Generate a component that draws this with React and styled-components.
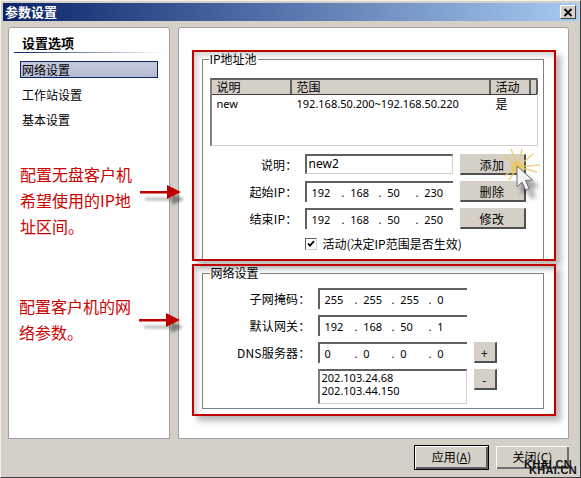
import React from "react";
import styled, { createGlobalStyle } from "styled-components";

const Global = createGlobalStyle`
  html, body { margin: 0; padding: 0; background: #d4d0c8; }
  * { box-sizing: border-box; }
`;
const FONT = `"Noto Sans", "Noto Sans CJK SC", sans-serif`;
const CJK = `"Noto Sans CJK SC", "Noto Sans", sans-serif`;

const Window = styled.div`
  position: relative; width: 581px; height: 478px; overflow: hidden;
  display: flex; flex-direction: column;
  background: #d4d0c8;
  border-style: solid; border-width: 1px;
  border-color: #f4f2ee #404040 #404040 #f4f2ee;
  padding: 2px;
  font: 12px/14px ${CJK}; color: #000;
`;
const TitleBar = styled.div`
  flex: none; height: 18px; display: flex; align-items: center; justify-content: space-between;
  padding: 0 2px 0 2px;
  background: linear-gradient(90deg, #0a246a, #a6caf0);
  color: #fff; font-weight: 700; font-size: 13px; line-height: 18px;
`;
const CloseBtn = styled.div`
  width: 16px; height: 14px; background: #d4d0c8;
  border: 1px solid; border-color: #fff #404040 #404040 #fff;
  display: flex; align-items: center; justify-content: center;
`;
const Body = styled.div`
  flex: none; display: flex; gap: 8px; padding: 6px 0 0 5px; height: 418px;
`;
const Panel = styled.div`
  background: #fff; border: 1px solid #a0a0a0; border-radius: 3px 3px 0 0; height: 412px;
`;
const SidePanel = styled(Panel)`
  width: 162px; padding: 7px 5px 0 5px;
`;
const SideTitle = styled.div`
  font-weight: 700; font-size: 13px; line-height: 16px; padding-left: 8px; height: 17px;
`;
const SideRule = styled.div`
  height: 1px; background: linear-gradient(90deg, #0a246a, #ffffff);
  margin-bottom: 8px;
`;
const NavList = styled.div`
  display: flex; flex-direction: column; gap: 8px; padding-left: 6px;
`;
const NavItem = styled.div`
  width: 138px; height: 17px; line-height: 15px; padding-left: 1px;
  border: 1px solid ${p => (p.$active ? "#0a246a" : "transparent")};
  background: ${p => (p.$active ? "linear-gradient(180deg,#c5cadb,#b6bcd2)" : "transparent")};
`;
const Note = styled.div`
  color: #cc0000; font-size: 16px; line-height: 26px; width: 118px;
  margin-left: ${p => p.$left}px; margin-top: ${p => p.$top}px;
  font-family: ${CJK};
`;
const MainPanel = styled(Panel)`
  width: 391px; padding: 22px 12px 0 13px; display: flex; flex-direction: column; gap: 3px;
`;
const Callout = styled.div`
  height: ${p => p.$h}px; width: 364px; overflow: hidden;
  border: 2.5px solid #c00000;
  padding: 0 10px 5px 7.5px;
  box-shadow: 5px 5px 6px rgba(0,0,0,.28), inset 4px 4px 5px rgba(0,0,0,.16);
`;
const Group = styled.fieldset`
  margin: 0; border: 1px solid #808080; min-width: 0;
  height: ${p => p.$h}px;
  padding: ${p => p.$pad};
`;
const Legend = styled.legend`
  margin-left: ${p => p.$left}px; padding: 0 1px; line-height: 14px; font-size: 12px;
`;
const ListBox = styled.div`
  width: 328px; height: 68px; margin-bottom: 8px;
  border-style: solid; border-width: 2px 1px 1px 2px;
  border-color: #606060 #d4d0c8 #d4d0c8 #808080;
  background: #fff;
`;
const ListHead = styled.div`
  display: grid; grid-template-columns: 80px 199px 40px 1fr; height: 15px;
  border-bottom: 1px solid #404040;
`;
const HeadCell = styled.div`
  background: #d4d0c8; padding-left: 5px; line-height: 14px;
  border-style: solid; border-width: 0 2px 0 0; border-color: #606060;
`;
const ListRow = styled.div`
  display: grid; grid-template-columns: 80px 199px 40px; height: 16px; line-height: 17px;
`;
const Cell = styled.div`
  padding-left: 5px; font: 11px/17px ${FONT};
`;
const CnCell = styled(Cell)`
  font: 12px/17px ${CJK};
`;
const FormGrid = styled.div`
  display: grid; row-gap: 6px; column-gap: ${p => p.$gap}px;
  grid-template-columns: ${p => p.$cols};
  grid-auto-rows: 21px;
`;
const Label = styled.div`
  text-align: right; line-height: 21px; grid-column: 1; white-space: nowrap; letter-spacing: .2px;
`;
const TextBox = styled.div`
  height: 20px; padding-left: 2px;
  border-style: solid; border-width: 2px 1px 1px 2px;
  border-color: #606060 #d4d0c8 #d4d0c8 #606060;
  font: 12px/16px ${FONT};
  background: #fff;
`;
const IpBox = styled.div`
  display: flex; height: 21px; padding-left: 5px;
  border-style: solid; border-width: 2px 0 0 2px; border-color: #606060;
  font: 11px/19px ${FONT};
`;
const Octet = styled.span`
  width: 37px; white-space: pre; flex: none;
  &:first-child { width: 30px; }
`;
const Btn = styled.div`
  background: #d4d0c8; text-align: center; line-height: 19px; font-size: 12px; letter-spacing: .5px;
  border-style: solid; border-width: 1px 2px 2px 1px;
  border-color: #d4d0c8 #505050 #505050 #d4d0c8;
`;
const CheckRow = styled.div`
  grid-column: 2 / span 2; display: flex; align-items: center; gap: 6px; height: 16px; margin-top: 1px;
`;
const Check = styled.div`
  width: 12px; height: 12px; flex: none; background: #fff;
  border-style: solid; border-width: 1px; border-color: #606060 #d4d0c8 #d4d0c8 #606060;
  display: flex; align-items: center; justify-content: center;
`;
const DnsBox = styled.div`
  grid-column: 2; height: 35px; padding-left: 2px;
  border-style: solid; border-width: 2px 1px 1px 2px;
  border-color: #606060 #d4d0c8 #d4d0c8 #808080;
  font: 11px/13px ${FONT};
`;
const Footer = styled.div`
  flex: none; display: flex; justify-content: flex-end; gap: 6px; padding: 6px 8px 0 0;
`;
const FootBtn = styled.div`
  width: 75px; height: 25px; text-align: center; line-height: 21px; background: #d4d0c8; font-size: 12px;
  border: 1px solid ${p => (p.$default ? "#000" : "#d4d0c8")};
  box-shadow: ${p => (p.$default
    ? "inset 1px 1px 0 #fff, inset -2px -2px 0 #606060"
    : "inset 1px 1px 0 #fff, inset -2px -2px 0 #707070")};
  u { text-underline-offset: 1px; }
`;
const Overlay = styled.svg`
  position: absolute; left: ${p => p.$x - 1}px; top: ${p => p.$y - 1}px; overflow: visible;
`;
const Mark = styled.div`
  position: absolute; left: ${p => p.$x - 1}px; top: ${p => p.$y - 1}px;
  font: 700 11px/11px "Liberation Sans", sans-serif; color: #111; letter-spacing: .3px;
`;

const Ip = ({ v }) => (
  <IpBox>
    <Octet>{v[0]}</Octet>
    <Octet>{`.  ${v[1]}`}</Octet>
    <Octet>{`.  ${v[2]}`}</Octet>
    <Octet>{`.  ${v[3]}`}</Octet>
  </IpBox>
);

const Arrow = ({ x, y }) => (
  <Overlay $x={x} $y={y} width="44" height="20" viewBox="0 0 44 20">
    <defs>
      <filter id={`ab${x}`} x="-20%" y="-50%" width="140%" height="200%"><feGaussianBlur stdDeviation="1.5" /></filter>
    </defs>
    <path d="M3 10h27V5l12 6-12 6v-5H3z" fill="#000" opacity=".4" filter={`url(#ab${x})`} transform="translate(2 3)" />
    <path d="M0 6h27V0l14 7-14 7V8.500H0z" fill="#c00000" />
  </Overlay>
);

export default function App() {
  return (
    <>
      <Global />
      <Window>
        <TitleBar>
          <span>参数设置</span>
          <CloseBtn>
            <svg width="10" height="9" viewBox="0 0 10 9"><path d="M1.5 1l7 7M8.500 1l-7 7" stroke="#000" strokeWidth="1.800" /></svg>
          </CloseBtn>
        </TitleBar>
        <Body>
          <SidePanel>
            <SideTitle>设置选项</SideTitle>
            <SideRule />
            <NavList>
              <NavItem $active>网络设置</NavItem>
              <NavItem>工作站设置</NavItem>
              <NavItem>基本设置</NavItem>
            </NavList>
            <Note $left={6} $top={33}>配置无盘客户机希望使用的IP地址区间。</Note>
            <Note $left={5} $top={54}>配置客户机的网络参数。</Note>
          </SidePanel>
          <MainPanel>
            <Callout $h={211}>
              <Group $h={212} $pad="12px 5px 0 7px">
                <Legend $left={-1}>IP地址池</Legend>
                <ListBox>
                  <ListHead>
                    <HeadCell>说明</HeadCell>
                    <HeadCell>范围</HeadCell>
                    <HeadCell>活动</HeadCell>
                    <HeadCell />
                  </ListHead>
                  <ListRow>
                    <Cell>new</Cell>
                    <Cell>192.168.50.200~192.168.50.220</Cell>
                    <CnCell>是</CnCell>
                  </ListRow>
                </ListBox>
                <FormGrid $cols="88px 148px 66px" $gap={7}>
                  <Label>说明：</Label>
                  <TextBox>new2</TextBox>
                  <Btn>添加</Btn>
                  <Label>起始IP：</Label>
                  <Ip v={["192", "168", "50", "230"]} />
                  <Btn>删除</Btn>
                  <Label>结束IP：</Label>
                  <Ip v={["192", "168", "50", "250"]} />
                  <Btn>修改</Btn>
                  <CheckRow>
                    <Check>
                      <svg width="8" height="8" viewBox="0 0 8 8"><path d="M1 3.500l2 2.200L7 1.200" fill="none" stroke="#000" strokeWidth="1.800" /></svg>
                    </Check>
                    活动(决定IP范围是否生效)
                  </CheckRow>
                </FormGrid>
              </Group>
            </Callout>
            <Callout $h={152}>
              <Group $h={143} $pad="8px 5px 0 0">
                <Legend $left={7}>网络设置</Legend>
                <FormGrid $cols="108px 149px 23px" $gap={7}>
                  <Label>子网掩码：</Label>
                  <Ip v={["255", "255", "255", "0"]} />
                  <span />
                  <Label>默认网关：</Label>
                  <Ip v={["192", "168", "50", "1"]} />
                  <span />
                  <Label>DNS服务器：</Label>
                  <Ip v={["0", "0", "0", "0"]} />
                  <Btn>+</Btn>
                  <DnsBox>202.103.24.68<br />202.103.44.150</DnsBox>
                  <Btn>-</Btn>
                </FormGrid>
              </Group>
            </Callout>
          </MainPanel>
        </Body>
        <Footer>
          <FootBtn $default>应用(<u>A</u>)</FootBtn>
          <FootBtn>关闭(<u>C</u>)</FootBtn>
        </Footer>
        <Arrow x={140} y={185} />
        <Arrow x={139} y={313} />
        <Overlay $x={500} $y={148} width="44" height="50" viewBox="0 0 44 50">
          <defs>
            <filter id="cb" x="-30%" y="-30%" width="160%" height="160%"><feGaussianBlur stdDeviation="2" /></filter>
          </defs>
          <g stroke="#eccb6c" strokeWidth="1.4">
            <path d="M18 19L3 7M18 19L33 6M18 19L40 17M18 19L4 28M18 19L11 1M18 19L22 1M18 19L37 24M18 19L9 32" opacity=".9" />
          </g>
          <circle cx="17" cy="19" r="6" fill="#e8c860" opacity=".8" />
          <path d="M18 20v24l6-5 4 9 5-2-4-9 8-1z" fill="#000" opacity=".35" filter="url(#cb)" transform="translate(3 3)" />
          <path d="M17 18v21l5-5 3.500 8 3.500-1.500-3.500-8 7-.5z" fill="#f4f4f4" stroke="#707070" strokeWidth="1" />
        </Overlay>
        <Mark $x={524} $y={459}>KHAI.CN</Mark>
        <Mark $x={529} $y={465}>KHAI.CN</Mark>
      </Window>
    </>
  );
}
